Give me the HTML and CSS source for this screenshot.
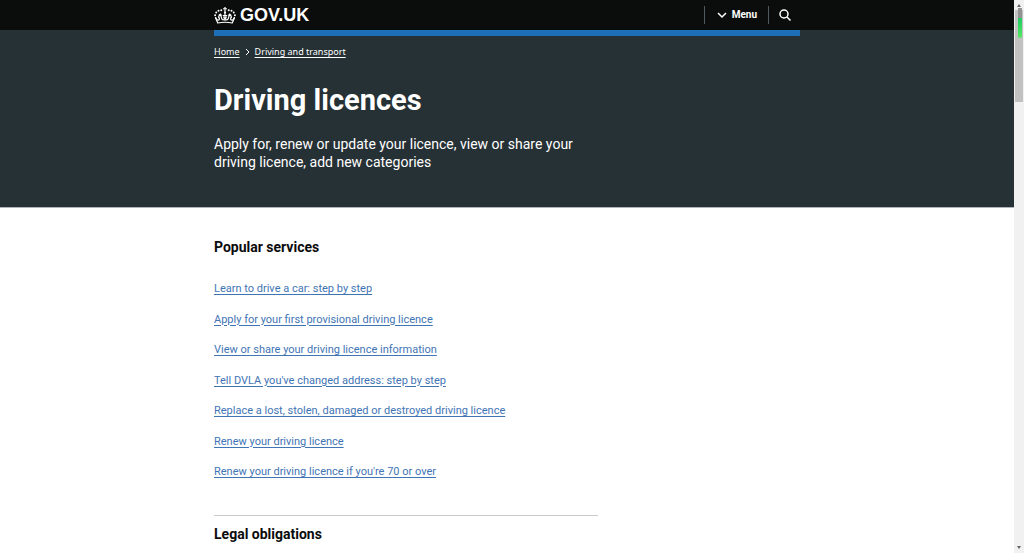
FILE: index.html
```html
<!DOCTYPE html>
<html lang="en">
<head>
<meta charset="utf-8">
<meta name="viewport" content="width=device-width, initial-scale=1">
<title>Driving licences - GOV.UK</title>
<link rel="stylesheet" href="styles.css">
</head>
<body>
<div class="page">
  <header class="header">
    <div class="container header-row">
      <a class="logo" href="#">
        <svg class="crown" viewBox="0 0 44 34" aria-hidden="true" fill="#fff">
          <path d="M20.500 0h3l-.6 2.500 2.600-.6v3l-2.600-.6.6 4h-3l.6-4-2.600.6v-3l2.600.6z"/>
          <circle cx="22" cy="11" r="2.300"/>
          <circle cx="14.500" cy="6.500" r="2"/><circle cx="29.500" cy="6.500" r="2"/>
          <circle cx="9" cy="7.500" r="2"/><circle cx="35" cy="7.500" r="2"/>
          <circle cx="4.500" cy="11" r="2"/><circle cx="39.500" cy="11" r="2"/>
          <circle cx="2.200" cy="16.500" r="2"/><circle cx="41.800" cy="16.500" r="2"/>
          <g fill="none" stroke="#fff" stroke-width="2.400" stroke-linejoin="round" stroke-linecap="round">
            <path d="M3 21l4.500 11q14.500-3 29 0L41 21"/>
            <path d="M3.500 21.500q2 6 6 4.500 3-2-.5-6l3.500-6 3 9q1.500 4 4.500 2 2-2-.5-5"/>
            <path d="M40.500 21.500q-2 6-6 4.500-3-2 .5-6l-3.500-6-3 9q-1.500 4-4.500 2-2-2 .5-5"/>
            <path d="M22 13v14M18.500 17h7M10 16h5M29 16h5"/>
          </g>
        </svg>
        <span>GOV.UK</span>
      </a>
      <nav class="tools" aria-label="Menu">
        <button class="tool" type="button">
          <svg class="chevron" viewBox="0 0 10 7" aria-hidden="true"><path d="M1 1l4 4 4-4"/></svg>
          Menu
        </button>
        <button class="tool" type="button" aria-label="Search GOV.UK">
          <svg class="search" viewBox="0 0 12 12" aria-hidden="true"><circle cx="5" cy="5" r="4"/><path d="M8 8l3.500 3.500"/></svg>
        </button>
      </nav>
    </div>
  </header>
  <div class="hero">
    <div class="container">
      <div class="blue-bar"></div>
      <nav class="breadcrumbs" aria-label="Breadcrumb">
        <a href="#">Home</a>
        <svg class="crumb-arrow" viewBox="0 0 5 8" aria-hidden="true"><path d="M1 1l3 3-3 3"/></svg>
        <a href="#">Driving and transport</a>
      </nav>
      <div class="column">
        <h1>Driving licences</h1>
        <p class="lead">Apply for, renew or update your licence, view or share your driving licence, add new categories</p>
      </div>
    </div>
  </div>
  <main class="container">
    <div class="column">
      <section class="popular">
        <h2>Popular services</h2>
        <ul class="links">
          <li><a href="#">Learn to drive a car: step by step</a></li>
          <li><a href="#">Apply for your first provisional driving licence</a></li>
          <li><a href="#">View or share your driving licence information</a></li>
          <li><a href="#">Tell DVLA you've changed address: step by step</a></li>
          <li><a href="#">Replace a lost, stolen, damaged or destroyed driving licence</a></li>
          <li><a href="#">Renew your driving licence</a></li>
          <li><a href="#">Renew your driving licence if you're 70 or over</a></li>
        </ul>
      </section>
      <section class="legal">
        <h2>Legal obligations</h2>
      </section>
    </div>
  </main>
</div>
<div class="scroll" aria-hidden="true">
  <div class="thumb"></div>
  <div class="marker"></div>
  <svg class="arrow-up" viewBox="0 0 4 3"><path d="M2 0l2 3H0z"/></svg>
  <svg class="arrow-down" viewBox="0 0 4 3"><path d="M0 0h4L2 3z"/></svg>
</div>
</body>
</html>
```
FILE: styles.css
```css
* {
  box-sizing: border-box;
}
body {
  margin: 0;
  padding-right: 10px;
  background: #fff;
  color: #0b0c0c;
  font-family: Roboto, "Noto Sans", sans-serif;
}
h1, h2, p, ul {
  margin: 0;
  padding: 0;
}
.container {
  max-width: 586px;
  margin: 0 auto;
}
.column {
  max-width: 384px;
}
.header {
  background: #0b0c0c;
}
.header-row {
  display: flex;
  justify-content: space-between;
  align-items: center;
  height: 30px;
}
.logo {
  display: flex;
  align-items: center;
  gap: 4px;
  color: #fff;
  font: bold 18px/20px "Liberation Sans", Arial, sans-serif;
  text-decoration: none;
}
.crown {
  width: 22px;
  height: 17px;
}
.tools {
  display: flex;
}
.tool {
  display: flex;
  align-items: center;
  gap: 5px;
  height: 18px;
  padding: 0 12px;
  border: 0;
  border-left: 1px solid #505a5f;
  background: none;
  color: #fff;
  font: bold 10px/18px Roboto, "Noto Sans", sans-serif;
}
.tool:first-child {
  padding-right: 11px;
}
.tool:last-child {
  padding: 0 9px 0 10px;
}
.tool svg, .crumb-arrow {
  fill: none;
  stroke: #fff;
  stroke-width: 1.5;
}
.chevron {
  width: 10px;
  height: 7px;
}
.search {
  width: 12px;
  height: 12px;
}
.hero {
  background: #263135;
  border-bottom: 1px solid #b1b4b6;
  padding-bottom: 36px;
}
.blue-bar {
  height: 6px;
  background: #1d70b8;
}
.breadcrumbs {
  display: flex;
  align-items: center;
  gap: 5px;
  padding-top: 8px;
  font-family: "Noto Sans", sans-serif;
  font-size: 9px;
  line-height: 15px;
}
.breadcrumbs a {
  color: #fff;
  text-underline-offset: 2px;
}
.crumb-arrow {
  width: 5px;
  height: 8px;
  stroke-width: 1;
}
h1 {
  padding-top: 24px;
  color: #fff;
  font-size: 29px;
  line-height: 34px;
}
.lead {
  padding-top: 18px;
  color: #fff;
  font-size: 14px;
  line-height: 18px;
}
h2 {
  font-size: 14px;
  line-height: 18px;
}
.popular {
  padding: 30px 0 34px;
}
.links {
  display: grid;
  align-content: space-between;
  min-height: 225px;
  padding-top: 24px;
  list-style: none;
  font-size: 11px;
  line-height: 18px;
}
.links a {
  color: #3f75b5;
  text-underline-offset: 2px;
}
.legal {
  border-top: 1px solid #c8cacb;
  padding: 9px 0;
}
.scroll {
  position: fixed;
  top: 0;
  right: 0;
  bottom: 0;
  width: 10px;
  background: #f1f1f1;
}
.thumb {
  position: absolute;
  top: 10px;
  left: 1px;
  right: 1px;
  height: 92px;
  background: #c1c1c1;
}
.marker {
  position: absolute;
  top: 8px;
  left: 4px;
  width: 4px;
  height: 30px;
  border-radius: 0 0 2px 2px;
  background: linear-gradient(#929292 10px, #20cc62 10px, #55e862);
}
.arrow-up, .arrow-down {
  position: absolute;
  left: 3px;
  width: 4px;
  height: 3px;
  fill: #666;
}
.arrow-up {
  top: 4px;
}
.arrow-down {
  bottom: 4px;
}
```
